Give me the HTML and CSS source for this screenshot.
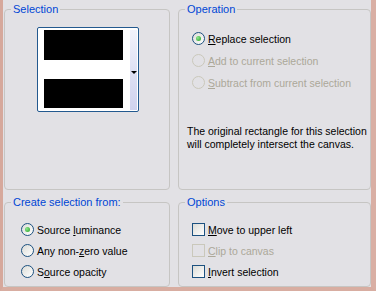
FILE: index.html
```html
<!DOCTYPE html>
<html lang="en">
<head>
  <meta charset="UTF-8" />
  <title>Selection</title>
  <link rel="stylesheet" href="styles.css">
</head>
<body>
  <div class="dialog">
    <fieldset class="group sel">
      <legend>Selection</legend>
      <div class="picker">
        <div class="swatches">
          <div class="swatch"></div>
          <div class="swatch"></div>
        </div>
        <div class="drop"><span class="arrow"></span></div>
      </div>
    </fieldset>

    <fieldset class="group op">
      <legend>Operation</legend>
      <div class="choices wide">
        <label class="choice"><span class="radio on"></span><span><u>R</u>eplace selection</span></label>
        <label class="choice off"><span class="radio"></span><span><u>A</u>dd to current selection</span></label>
        <label class="choice off"><span class="radio"></span><span><u>S</u>ubtract from current selection</span></label>
      </div>
      <p class="note">The original rectangle for this selection<br>will completely intersect the canvas.</p>
    </fieldset>

    <fieldset class="group from">
      <legend>Create selection from:</legend>
      <div class="choices">
        <label class="choice"><span class="radio on"></span><span>Source <u>l</u>uminance</span></label>
        <label class="choice"><span class="radio"></span><span>Any non-<u>z</u>ero value</span></label>
        <label class="choice"><span class="radio"></span><span>S<u>o</u>urce opacity</span></label>
      </div>
    </fieldset>

    <fieldset class="group opts">
      <legend>Options</legend>
      <div class="choices">
        <label class="choice"><span class="check"></span><span><u>M</u>ove to upper left</span></label>
        <label class="choice off"><span class="check"></span><span><u>C</u>lip to canvas</span></label>
        <label class="choice"><span class="check"></span><span><u>I</u>nvert selection</span></label>
      </div>
    </fieldset>
  </div>
</body>
</html>
```

FILE: styles.css
```css
* {
  box-sizing: border-box;
}
body {
  margin: 0;
  width: 376px;
  height: 291px;
  background: #e2e1e5;
  font-family: 'Liberation Sans', Arial, sans-serif;
  font-size: 10.5px;
  color: #000;
}
.dialog {
  height: 291px;
  display: grid;
  grid-template-columns: 166px 193px;
  grid-template-rows: 187px 91px;
  column-gap: 8px;
  row-gap: 6px;
  padding: 3px 0 0 1px;
  border-left: 3px solid #d6a89c;
  border-right: 5px solid #d9afa4;
  border-bottom: 4px solid #d8ada1;
}

.group {
  margin: 0;
  padding: 0;
  min-width: 0;
  border: 1px solid #c6c5c3;
  border-radius: 4px;
}
.group legend {
  margin-left: 6px;
  padding: 0 2px;
  line-height: 13px;
  font-size: 11px;
  color: #0046d5;
}

/* selection picker */
.picker {
  display: flex;
  width: 102px;
  height: 85px;
  margin: 11px 0 0 32px;
  padding: 2px 0 0 6px;
  background: #fff;
  border: 1px solid #23598f;
  border-radius: 2px;
}
.swatches {
  display: flex;
  flex-direction: column;
  gap: 19px;
  width: 79px;
}
.swatch {
  height: 30px;
  background: #000;
}
.swatch + .swatch {
  height: 29px;
}
.drop {
  width: 7px;
  margin-left: 7px;
  margin-bottom: 1px;
  display: flex;
  align-items: center;
  justify-content: center;
  background: linear-gradient(#f1f2fb, #dfe1f4 50%, #cfd2ee);
}
.arrow {
  width: 0;
  height: 0;
  margin-top: 5px;
  border-left: 3px solid transparent;
  border-right: 3px solid transparent;
  border-top: 3px solid #000;
}

/* radios and checks */
.choices {
  display: flex;
  flex-direction: column;
  gap: 8px;
  padding: 14px 0 0 16px;
}
.op .choices {
  gap: 9px;
  padding: 16px 0 0 13px;
}
.opts .choices {
  padding-left: 13px;
}
.choice {
  display: flex;
  align-items: center;
  height: 13px;
  white-space: nowrap;
}
.choice.off {
  color: #aca899;
}
.radio,
.check {
  flex: none;
  width: 13px;
  height: 13px;
  margin-right: 3px;
  border: 1px solid #1c5180;
  background: linear-gradient(135deg, #dcdcd7, #fff);
  display: flex;
  align-items: center;
  justify-content: center;
}
.radio {
  border-radius: 50%;
}
.radio.on::after {
  content: "";
  width: 5px;
  height: 5px;
  border-radius: 50%;
  background: radial-gradient(circle at 35% 35%, #8ee58e, #21a121);
}
.off .radio,
.off .check {
  border-color: #cac8bb;
  background: #e2e1e5;
}

.note {
  margin: 36px 0 0 8px;
  line-height: 13px;
  white-space: nowrap;
}
```
